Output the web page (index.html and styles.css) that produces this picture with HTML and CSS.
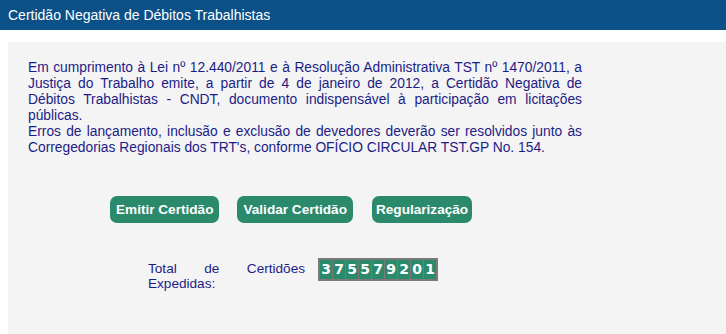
FILE: index.html
```html
<!DOCTYPE html>
<html lang="pt-BR">
<head>
<meta charset="utf-8">
<title>Certidão Negativa de Débitos Trabalhistas</title>
<link rel="stylesheet" href="styles.css">
</head>
<body>
<div class="header">Certidão Negativa de Débitos Trabalhistas</div>
<div class="panel">
  <p class="intro">Em cumprimento à Lei nº 12.440/2011 e à Resolução Administrativa TST nº 1470/2011, a Justiça do Trabalho emite, a partir de 4 de janeiro de 2012, a Certidão Negativa de Débitos Trabalhistas - CNDT, documento indispensável à participação em licitações públicas.<br>Erros de lançamento, inclusão e exclusão de devedores deverão ser resolvidos junto às Corregedorias Regionais dos TRT's, conforme OFÍCIO CIRCULAR TST.GP No. 154.</p>
  <div class="actions">
    <a class="btn btn-emitir" href="#">Emitir Certidão</a>
    <a class="btn btn-validar" href="#">Validar Certidão</a>
    <a class="btn btn-regular" href="#">Regularização</a>
  </div>
  <div class="counter-row">
    <div class="counter-label">Total de Certidões Expedidas:</div>
    <div class="counter">
      <span class="digit">3</span><span class="digit">7</span><span class="digit">5</span><span class="digit">5</span><span class="digit">7</span><span class="digit">9</span><span class="digit">2</span><span class="digit">0</span><span class="digit">1</span>
    </div>
  </div>
</div>
</body>
</html>
```
FILE: styles.css
```css
html, body {
  margin: 0;
  padding: 0;
  background: #ffffff;
  font-family: "Liberation Sans", Arial, sans-serif;
}
.header {
  height: 30px;
  line-height: 30px;
  background: #0b5087;
  color: #ffffff;
  font-size: 14px;
  padding-left: 8px;
}
.panel {
  margin: 12px 0 0 8px;
  background: #f4f4f4;
  padding: 18px 0 0 20px;
  min-height: 292px;
  box-sizing: border-box;
}
.intro {
  margin: 0;
  width: 554px;
  font-size: 13.8px;
  line-height: 16px;
  color: #1c1c86;
  text-align: justify;
}
.actions {
  display: flex;
  gap: 18px;
  margin: 40px 0 0 82px;
}
.btn {
  display: inline-block;
  background: #2b8a6c;
  color: #ffffff;
  font-weight: bold;
  font-size: 13.6px;
  height: 27px;
  line-height: 27px;
  padding: 0 6px;
  border-radius: 7px;
  text-decoration: none;
}
.btn-regular { margin-left: 1px; padding: 0 4px; }
.counter-row {
  display: flex;
  align-items: flex-start;
  margin: 35px 0 0 120px;
}
.counter-label {
  width: 157px;
  font-size: 13.6px;
  line-height: 15px;
  color: #1c1c86;
  text-align: justify;
  text-align-last: left;
  padding-top: 3px;
}
.counter {
  display: flex;
  gap: 1px;
  margin-left: 13px;
  background: #7a7a7a;
  padding: 2px;
}
.digit {
  width: 12px;
  height: 19px;
  line-height: 19px;
  text-align: center;
  background: #2b8a6c;
  color: #ffffff;
  font-weight: bold;
  font-size: 14px;
  font-family: "DejaVu Sans", "Liberation Sans", sans-serif;
}
```
